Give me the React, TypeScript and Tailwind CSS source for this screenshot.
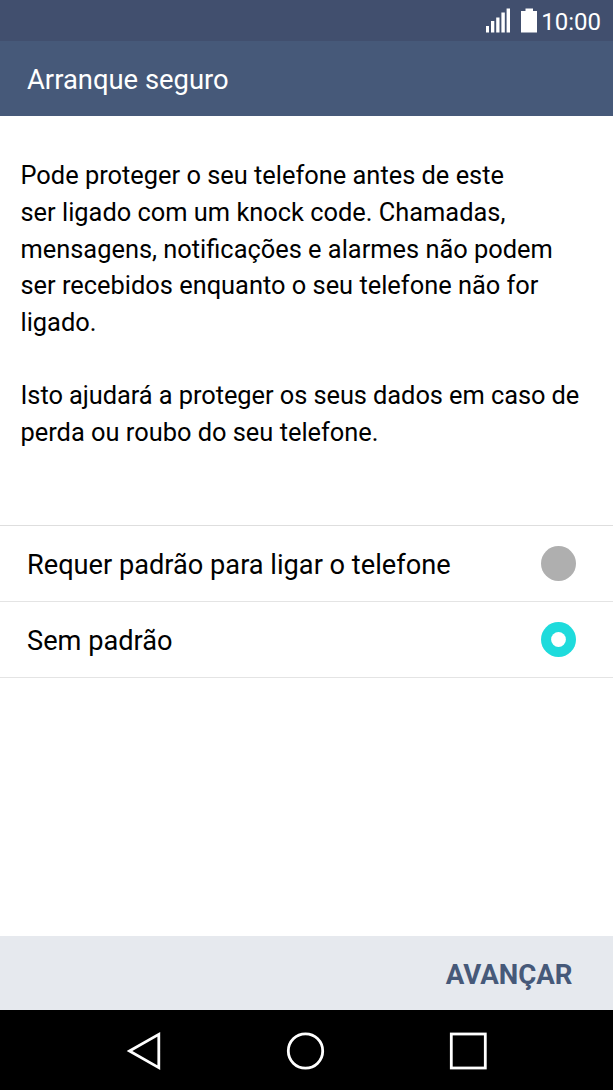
const paragraphs = [
  [
    'Pode proteger o seu telefone antes de este',
    'ser ligado com um knock code. Chamadas,',
    'mensagens, notificações e alarmes não podem',
    'ser recebidos enquanto o seu telefone não for',
    'ligado.',
  ],
  [
    'Isto ajudará a proteger os seus dados em caso de',
    'perda ou roubo do seu telefone.',
  ],
];

function StatusBar() {
  return (
    <div className="flex h-[41px] shrink-0 items-center justify-end bg-[#414f6e] pr-[12px] text-white">
      <svg width="25" height="25" viewBox="0 0 25 25" fill="currentColor" className="mr-[10px]">
        <path d="M0 18h3v6.500H0zM5 13h3.300v11.500H5zM10.200 9.500h3.300v15h-3.300zM15.400 4.500h3.400v20h-3.400zM20.600 0.500h3.400v24h-3.400z" />
      </svg>
      <svg width="16" height="25" viewBox="0 0 16 25" fill="currentColor" className="mr-[4px]">
        <path d="M4.500 0.500h7.500v2.500h4v21.500H0V3h4.500z" />
      </svg>
      <span className="pt-[2px] text-[24px] leading-[30px]">10:00</span>
    </div>
  );
}

function Option({ label, checked }: { label: string; checked: boolean }) {
  return (
    <label className="flex h-[76px] items-center justify-between border-b border-[#e4e4e4] pl-[27px] pr-[37px] text-[27.200px]">
      <span className="pt-[3px]">{label}</span>
      <svg width="35" height="35" viewBox="0 0 35 35">
        <circle cx="17.5" cy="17.5" r="17.5" fill={checked ? '#1edbdc' : '#afafaf'} />
        {checked && <circle cx="17.5" cy="17.5" r="7.4" fill="white" />}
      </svg>
    </label>
  );
}

export default function App() {
  return (
    <div className="flex h-[1090px] w-[613px] flex-col overflow-hidden bg-white font-[Roboto,sans-serif] text-black">
      <StatusBar />
      <header className="flex h-[75px] shrink-0 items-center bg-[#465979] pl-[27px] pt-[5px] text-[27.400px] text-white">
        Arranque seguro
      </header>
      <main className="flex flex-1 flex-col">
        <div className="flex h-[409px] flex-col gap-[36.600px] pl-[20.500px] pt-[41.400px] text-[25.400px] leading-[36.600px]">
          {paragraphs.map((lines, i) => (
            <p key={i} className="last:first-line:tracking-[-0.06px]">
              {lines.map((line) => (
                <span key={line} className="block whitespace-nowrap">{line}</span>
              ))}
            </p>
          ))}
        </div>
        <div className="border-t border-[#dedede]">
          <Option label="Requer padrão para ligar o telefone" checked={false} />
          <Option label="Sem padrão" checked />
        </div>
      </main>
      <footer className="flex h-[74px] shrink-0 items-center justify-end bg-[#e6e9ee] pr-[40.500px] pt-[4px] text-[27.600px] font-bold text-[#465979]">
        AVANÇAR
      </footer>
      <nav className="flex h-[80px] shrink-0 items-center justify-center bg-black">
        <svg width="613" height="80" viewBox="0 0 613 80" fill="none" stroke="white" strokeWidth="2.8">
          <path d="M129.500 41 158.800 24.300V57.700Z" />
          <circle cx="305.500" cy="41" r="17.200" />
          <rect x="451.300" y="24" width="34" height="34" />
        </svg>
      </nav>
    </div>
  );
}
